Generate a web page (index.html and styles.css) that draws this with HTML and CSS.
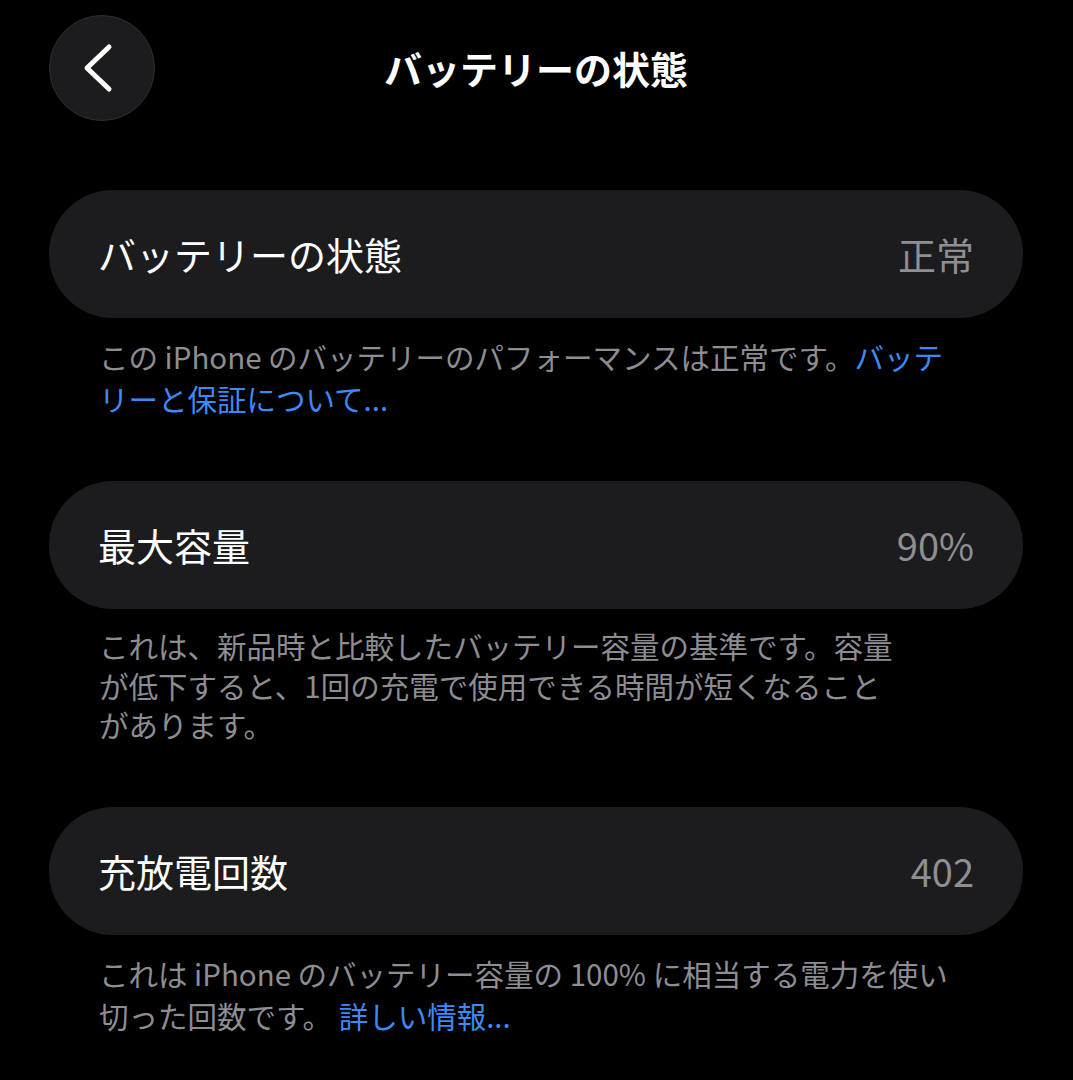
FILE: index.html
```html
<!DOCTYPE html>
<html lang="ja">
<head>
<meta charset="utf-8">
<title>バッテリーの状態</title>
<link rel="stylesheet" href="styles.css">
</head>
<body>
<div class="page">
  <header class="nav">
    <button class="back" aria-label="戻る">
      <svg width="40" height="56" viewBox="0 0 40 56" aria-hidden="true">
        <path d="M30 7 L8 28 L30 49" fill="none" stroke="#fff" stroke-width="5" stroke-linecap="round" stroke-linejoin="round"/>
      </svg>
    </button>
    <h1 class="title">バッテリーの状態</h1>
    <div class="spacer"></div>
  </header>

  <main class="content">
    <section class="group">
      <div class="cell"><span class="label">バッテリーの状態</span><span class="value">正常</span></div>
      <p class="footer">この iPhone のバッテリーのパフォーマンスは正常です。<a class="link">バッテ<br>リーと保証について...</a></p>
    </section>

    <section class="group">
      <div class="cell"><span class="label">最大容量</span><span class="value">90%</span></div>
      <p class="footer footer-compact">これは、新品時と比較したバッテリー容量の基準です。容量<br>が低下すると、1回の充電で使用できる時間が短くなること<br>があります。</p>
    </section>

    <section class="group">
      <div class="cell"><span class="label">充放電回数</span><span class="value">402</span></div>
      <p class="footer">これは iPhone のバッテリー容量の 100% に相当する電力を使い<br>切った回数です。 <a class="link">詳しい情報...</a></p>
    </section>
  </main>
</div>
</body>
</html>
```

FILE: styles.css
```css
* { box-sizing: border-box; }
html, body {
  margin: 0;
  padding: 0;
  background: #000;
}
body {
  font-family: "Noto Sans CJK JP", "Noto Sans", "Liberation Sans", sans-serif;
  color: #fff;
  width: 1073px;
  height: 1080px;
  overflow: hidden;
}
.page {
  padding: 15px 50px 0 49px;
}
.nav {
  display: grid;
  grid-template-columns: 106px 1fr 106px;
  align-items: center;
  height: 106px;
}
.back {
  width: 106px;
  height: 106px;
  border-radius: 50%;
  background: #1c1c1e;
  border: 1.5px solid #2e2e31;
  display: flex;
  align-items: center;
  justify-content: center;
  padding: 0 6px 0 0;
  cursor: pointer;
}
.title {
  margin: 0;
  text-align: center;
  font-size: 38px;
  font-weight: 700;
  line-height: 1;
  letter-spacing: 0;
}
.content {
  margin-top: 69px;
  display: flex;
  flex-direction: column;
  gap: 62px;
}
.cell {
  height: 128px;
  border-radius: 64px;
  background: #1c1c1e;
  display: flex;
  align-items: center;
  justify-content: space-between;
  padding: 0 49px 0 49px;
}
.label {
  font-size: 38px;
  line-height: 1;
  color: #fff;
}
.value {
  font-size: 38px;
  line-height: 1;
  color: #8e8e93;
}
.footer {
  margin: 17px 0 0 0;
  padding-left: 50px;
  font-size: 29.5px;
  line-height: 42px;
  color: #8d8d92;
  white-space: nowrap;
}
.footer-compact {
  line-height: 39.5px;
}
.link {
  color: #3d8af7;
  text-decoration: none;
}
```
